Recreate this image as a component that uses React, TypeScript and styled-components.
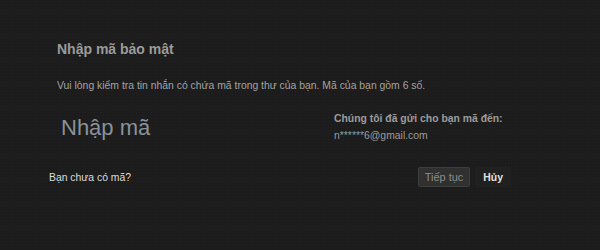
import React from 'react';
import styled, { createGlobalStyle } from 'styled-components';

const GlobalStyle = createGlobalStyle`
  html, body {
    margin: 0;
    padding: 0;
    background: #1c1c1c;
  }
  body {
    font-family: Arial, 'Liberation Sans', sans-serif;
    width: 600px;
    height: 250px;
    overflow: hidden;
  }
`;

const StyledPage = styled.div`
  width: 600px;
  height: 250px;
  box-sizing: border-box;
  padding: 40px 89px 0 49px;
  background-color: #1c1c1c;
  background-image: radial-gradient(rgba(255, 255, 255, 0.025) 1px, transparent 1px);
  background-size: 3px 3px;
`;

const StyledBody = styled.div`
  padding-left: 8px;
`;

const StyledTitle = styled.h1`
  font-size: 14px;
  font-weight: 700;
  color: #9b9b9b;
  margin: 0;
  line-height: 18px;
`;

const StyledText = styled.p`
  font-size: 10.4px;
  color: #a3a3a3;
  margin: 21px 0 0;
  line-height: 14px;
`;

const StyledRow = styled.div`
  display: grid;
  grid-template-columns: 277px 1fr;
  margin-top: 18px;
`;

const StyledInput = styled.input`
  background: transparent;
  border: none;
  outline: none;
  padding: 0 0 0 4px;
  margin: 0;
  font-family: inherit;
  font-size: 22px;
  height: 34px;
  width: 240px;
  color: #d0d0d0;
  &::placeholder {
    color: #8a919a;
  }
`;

const StyledSentTo = styled.div`
  font-size: 10.4px;
  line-height: 15px;
  color: #9b9b9b;
  white-space: nowrap;
  strong {
    display: block;
    font-weight: 700;
    margin-bottom: 2px;
  }
`;

const StyledFooter = styled.div`
  display: flex;
  align-items: center;
  margin-top: 22px;
`;

const StyledLink = styled.span`
  font-size: 10.4px;
  color: #dcdcdc;
  margin-right: auto;
`;

const StyledButton = styled.button<{ $primary?: boolean }>`
  font-family: inherit;
  font-size: ${({ $primary }) => ($primary ? '11px' : '10.4px')};
  font-weight: ${({ $primary }) => ($primary ? 400 : 700)};
  height: 20px;
  padding: 0 ${({ $primary }) => ($primary ? '6px' : '7px')};
  margin-left: ${({ $primary }) => ($primary ? '0' : '5px')};
  border-radius: 2px;
  border: 1px solid ${({ $primary }) => ($primary ? '#3d3d3d' : '#202020')};
  background: ${({ $primary }) => ($primary ? '#303030' : '#202020')};
  color: ${({ $primary }) => ($primary ? '#8c8c8c' : '#e2e2e2')};
  cursor: pointer;
`;

export default function App() {
  return (
    <>
      <GlobalStyle />
      <StyledPage>
        <StyledBody>
          <StyledTitle>Nhập mã bảo mật</StyledTitle>
          <StyledText>
            Vui lòng kiểm tra tin nhắn có chứa mã trong thư của bạn. Mã của bạn gồm 6 số.
          </StyledText>
          <StyledRow>
            <StyledInput placeholder="Nhập mã" />
            <StyledSentTo>
              <strong>Chúng tôi đã gửi cho bạn mã đến:</strong>
              n******6@gmail.com
            </StyledSentTo>
          </StyledRow>
        </StyledBody>
        <StyledFooter>
          <StyledLink>Bạn chưa có mã?</StyledLink>
          <StyledButton $primary>Tiếp tục</StyledButton>
          <StyledButton>Hủy</StyledButton>
        </StyledFooter>
      </StyledPage>
    </>
  );
}
